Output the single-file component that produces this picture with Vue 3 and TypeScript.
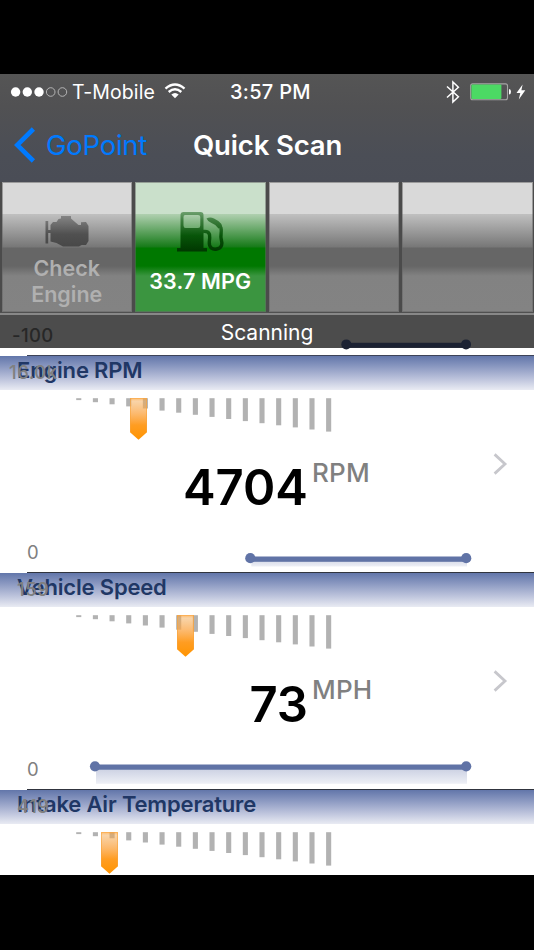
<script setup lang="ts">
interface Gauge {
  title: string
  max: string
  min: string
  value: string
  unit: string
  marker: number
  start: number
  fill: number
}

const gauges: Gauge[] = [
  { title: 'Engine RPM', max: '16.0k', min: '0', value: '4704', unit: 'RPM', marker: 130, start: 250.3, fill: 8 },
  { title: 'Vehicle Speed', max: '159', min: '0', value: '73', unit: 'MPH', marker: 177, start: 95, fill: 14 },
  { title: 'Intake Air Temperature', max: '419', min: '', value: '', unit: '', marker: 101, start: 0, fill: 0 },
]

const ticks = Array.from({ length: 16 }, (_, i) => ({ x: 76.2 + i * 16.66, h: 1.9 + i * 2.1 }))
</script>

<template>
  <main class="phone">
    <section class="screen">
      <header class="top">
        <div class="status">
          <svg class="signal" width="58" height="12" viewBox="0 0 58 12">
            <g fill="#fff">
              <circle cx="5.6" cy="6" r="4.7" />
              <circle cx="17.3" cy="6" r="4.7" />
              <circle cx="29" cy="6" r="4.7" />
            </g>
            <g fill="none" stroke="#bdbdbd" stroke-width="0.9">
              <circle cx="40.7" cy="6" r="4.3" />
              <circle cx="52.4" cy="6" r="4.3" />
            </g>
          </svg>
          <span class="carrier">T-Mobile</span>
          <svg class="wifi" width="22" height="16" viewBox="0 0 22 16">
            <g fill="none" stroke="#fff" stroke-width="2.4">
              <path d="M1.5 5.6 Q11 -2.6 20.5 5.6" />
              <path d="M4.7 9 Q11 3.6 17.3 9" />
            </g>
            <path d="M7.3 11.4 Q11 8.4 14.7 11.4 L11 15.2 Z" fill="#fff" />
          </svg>
          <span class="clock">3:57 PM</span>
          <svg class="bluetooth" width="14" height="24" viewBox="0 0 14 24">
            <path d="M1 6.5 L12.4 16.8 L6.9 22 V2 L12.4 7.2 L1 17.5" fill="none" stroke="#fff" stroke-width="1.5" />
          </svg>
          <svg class="battery" width="42" height="18" viewBox="0 0 42 18">
            <rect x="0.7" y="0.9" width="36.8" height="15.8" rx="2" fill="none" stroke="#a5a5a5" stroke-width="1.1" />
            <rect x="1.4" y="1.6" width="30" height="14.4" rx="1" fill="#4cd964" />
            <path d="M39 6 Q41 6.2 41 8.8 Q41 11.4 39 11.6 Z" fill="#fff" />
          </svg>
          <svg class="bolt" width="10" height="16" viewBox="0 0 10 16">
            <path d="M6.6 0.4 L0.5 9 H4.3 L2.8 15.5 L9.3 6.3 H5.4 Z" fill="#fff" />
          </svg>
        </div>
        <nav class="nav">
          <svg class="back" width="22" height="36" viewBox="0 0 22 36">
            <path d="M19.4 2 L3.2 18 L19.4 34" fill="none" stroke="#007aff" stroke-width="4.6" />
          </svg>
          <span class="back-label">GoPoint</span>
          <h1>Quick Scan</h1>
        </nav>
      </header>

      <div class="tiles">
        <div class="tile">
          <svg class="engine" width="46" height="34" viewBox="0 0 46 34">
            <defs>
              <linearGradient id="engineFill" x1="0" y1="0" x2="0" y2="1">
                <stop offset="0" stop-color="#858585" />
                <stop offset="0.6" stop-color="#505050" />
                <stop offset="1" stop-color="#484848" />
              </linearGradient>
            </defs>
            <path d="M1.5 7 H4.2 V16 H6.5 V11 L9 8 H12.5 L14.5 5 L17 4.5 V2 H27 V4.5 L31 8 L34.5 11 H37 V8.3 L42 8 L44.5 12 V27 L42 31 H37.5 L35 32.5 H19 L12.5 29 L6.5 27.5 V19 H4.2 V29.5 H1.5 Z" fill="url(#engineFill)" />
          </svg>
          <span class="check">Check<br>Engine</span>
        </div>
        <div class="tile green">
          <svg class="pump" width="50" height="42" viewBox="0 0 50 42">
            <defs>
              <linearGradient id="pumpFill" gradientUnits="userSpaceOnUse" x1="0" y1="0" x2="0" y2="41">
                <stop offset="0" stop-color="#73a474" />
                <stop offset="0.22" stop-color="#3f7f40" />
                <stop offset="0.6" stop-color="#075509" />
                <stop offset="1" stop-color="#003600" />
              </linearGradient>
            </defs>
            <path fill-rule="evenodd" d="M4.5 4 Q4.5 1 7.5 1 H24.5 Q27.5 1 27.5 4 V37 H31 V40.5 H1 V37 H4.5 Z M9 4 Q7.5 4 7.5 6 V14.5 Q7.5 17 9.5 17 H22 Q24.3 17 24.3 14.5 V6 Q24.3 4 22 4 Z" fill="url(#pumpFill)" />
            <path d="M27 20.5 Q32.5 19.8 33.5 23.5 Q34 26 33.3 31 C32.8 37 37 38.8 40.8 38 C46.5 36.8 46.4 32.5 45.2 28 C44.2 24.5 46 21 45 17 Q44 13.5 41 12" fill="none" stroke="url(#pumpFill)" stroke-width="3.4" />
            <path d="M30.5 7.5 Q34 5.5 38 7.5 L42.3 10 Q45.5 12 46 16 L42.5 17.5 Q40 13.5 35.5 12 Q32 11 30.5 7.5 Z" fill="url(#pumpFill)" />
          </svg>
          <span class="mpg">33.7 MPG</span>
        </div>
        <div class="tile"></div>
        <div class="tile"></div>
      </div>

      <div class="scan">
        <span class="floor">-100</span>
        <span class="scan-label">Scanning</span>
        <svg class="scan-line" width="132" height="12" viewBox="0 0 132 12">
          <rect x="6" y="4.8" width="120" height="5" fill="#1c2233" />
          <circle cx="6.3" cy="6.4" r="5" fill="#1c2233" />
          <circle cx="126" cy="6.4" r="5" fill="#1c2233" />
        </svg>
      </div>
      <div class="gap"></div>

      <article v-for="g in gauges" :key="g.title" class="gauge">
        <div class="heading">
          <h2>{{ g.title }}</h2>
          <span class="max" :class="{ wide: g.max.length > 3 }">{{ g.max }}</span>
        </div>
        <svg class="scale" width="534" height="50" viewBox="0 0 534 50">
          <defs>
            <linearGradient id="markerFill" x1="0" y1="0" x2="0" y2="1">
              <stop offset="0" stop-color="#ff9d2a" stop-opacity="0.65" />
              <stop offset="0.08" stop-color="#f3a850" stop-opacity="0.5" />
              <stop offset="0.35" stop-color="#fba544" stop-opacity="0.75" />
              <stop offset="0.65" stop-color="#ff9d22" />
              <stop offset="1" stop-color="#ff9400" />
            </linearGradient>
          </defs>
          <rect v-for="t in ticks" :key="t.x" :x="t.x" y="8.2" width="5.1" :height="t.h" fill="#b2b2b2" />
          <path :d="`M${g.marker} 8 h17 v34.2 l-8.5 7.6 l-8.5 -7.6 Z`" fill="url(#markerFill)" />
          <path :d="`M${g.marker + 0.5} 42 V8.6 h16 V42`" fill="none" stroke="#f9a33b" stroke-opacity="0.6" />
        </svg>
        <template v-if="g.value">
          <div class="reading">
            <strong>{{ g.value }}</strong>
            <span class="unit">{{ g.unit }}</span>
            <svg class="chevron" width="15" height="22" viewBox="0 0 15 22">
              <path d="M1.6 1.4 L12 11 L1.6 20.6" fill="none" stroke="#c7c7cc" stroke-width="2.8" />
            </svg>
          </div>
          <div class="history">
            <span class="min">{{ g.min }}</span>
            <svg class="trend" width="534" height="32" viewBox="0 0 534 32">
              <defs>
                <linearGradient id="areaFill" x1="0" y1="0" x2="0" y2="1">
                  <stop offset="0" stop-color="#ced3e4" />
                  <stop offset="1" stop-color="#eef0f6" />
                </linearGradient>
              </defs>
              <rect :x="g.start + 1" :y="g.fill > 10 ? 12.8 : 18.5" :width="466 - g.start" :height="g.fill" fill="url(#areaFill)" />
              <rect :x="g.start" :y="g.fill > 10 ? 7.5 : 16.5" :width="466 - g.start" height="5.3" fill="#6073a6" />
              <circle :cx="g.start" :cy="g.fill > 10 ? 9.3 : 18.2" r="5.1" fill="#6073a6" />
              <circle cx="466.2" :cy="g.fill > 10 ? 9.3 : 18.2" r="5.1" fill="#6073a6" />
            </svg>
          </div>
          <div class="rule"></div>
        </template>
      </article>
    </section>
  </main>
</template>

<style>
body { margin: 0; background: #000; }
</style>

<style scoped>
.phone {
  width: 534px;
  height: 950px;
  padding-top: 74px;
  box-sizing: border-box;
  background: #000;
  font-family: Inter, "Liberation Sans", sans-serif;
  overflow: hidden;
}
.screen { height: 801px; overflow: hidden; background: #fff; }
.top { height: 108px; background: linear-gradient(#555 0%, #515153 30%, #4b4e56 75%, #4a4d56 100%); color: #fff; }
.status { height: 36px; display: flex; align-items: center; box-sizing: border-box; padding: 0 8px 0 10px; white-space: nowrap; }
.carrier { font-size: 19.5px; margin-left: 4px; width: 83px; letter-spacing: 0.1px; }
.wifi { margin-left: 9px; margin-top: -2px; }
.clock { font-size: 20px; font-weight: 500; width: 82px; margin-left: 44px; letter-spacing: 0.3px; }
.bluetooth { margin-left: 134px; }
.battery { margin-left: 10px; }
.bolt { margin-left: 4px; }
.nav { height: 72px; display: flex; align-items: center; padding-left: 14px; }
.back { margin-top: -2px; }
.back-label { margin-left: 10px; width: 101px; color: #007aff; font-size: 27.5px; letter-spacing: -0.25px; margin-top: -2px; }
h1 { margin: -2px 0 0 46px; font-size: 27.5px; font-weight: 600; letter-spacing: -0.15px; white-space: nowrap; }
.tiles { height: 130px; display: grid; grid-template-columns: repeat(4, 130.5px); column-gap: 3px; padding: 0 1.5px; background: #4b4b4b; }
.tile {
  display: flex;
  flex-direction: column;
  align-items: center;
  box-sizing: border-box;
  border: 1px solid #66666688;
  background: linear-gradient(#d9d9d9 0 31.5px, #c0c0c0 32px, #777 65px, #666 66px 84px, #828282 94px, #838383 100%) border-box;
}
.tile.green {
  background: linear-gradient(#cae0cb 0 31.5px, #b0d0b0 32px, #167a18 65px, #007800 66px 84px, #3b9540 94px, #3b9540 100%) border-box;
}
.engine { margin-top: 31px; filter: blur(0.7px); }
.check { margin-top: 7px; color: #b0b0b0; font-size: 21.5px; line-height: 26px; font-weight: 600; text-align: center; }
.pump { margin: 28px 0 0 2px; filter: blur(0.5px); }
.mpg { margin-top: 15px; color: #fff; font-size: 21.5px; line-height: 26px; font-weight: 600; letter-spacing: 0.15px; white-space: nowrap; }
.scan { height: 36px; position: relative; box-sizing: border-box; background: linear-gradient(#505050 0 1px, #888 1px 3px, #4c4c4c 3px); text-align: center; }
.floor { position: absolute; left: 12px; top: 12px; font-size: 18.5px; line-height: 22px; font-weight: 500; letter-spacing: 0.4px; color: #272727; }
.scan-label { color: #fff; font-size: 21px; line-height: 41px; }
.scan-line { position: absolute; left: 340px; top: 26px; }
.gap { height: 8px; background: linear-gradient(90deg, transparent 27px, #3d4358 27px) 0 100% / 100% 1px no-repeat #fff; }
.gauge { height: 217px; display: flex; flex-direction: column; }
.heading { height: 34px; flex: none; position: relative; background: linear-gradient(#6276aa, #8997c0 30%, #b9c0da 65%, #e9ebf3); }
h2 { margin: 0; padding-left: 17px; color: #203765; font-size: 22px; line-height: 28px; font-weight: 600; letter-spacing: -0.17px; }
.max { position: absolute; left: 17px; top: 5px; color: #808080; font-size: 18.5px; line-height: 22px; font-weight: 500; letter-spacing: 0.5px; }
.max.wide { left: 9px; }
.scale, .trend { display: block; flex: none; }
.reading { height: 100px; display: flex; align-items: flex-start; flex: none; }
strong { width: 308px; text-align: right; font-size: 49px; line-height: 60px; font-weight: 600; margin-top: 18px; }
.unit { width: 180px; margin: 17px 0 0 4px; font-size: 26px; line-height: 32px; font-weight: 500; letter-spacing: 0.2px; color: #808080; }
.chevron { margin: 13px 0 0 1px; }
.history { height: 32px; position: relative; flex: none; }
.min { position: absolute; left: 27px; top: 1px; font-size: 18.5px; line-height: 22px; color: #808080; }
.rule { height: 1px; margin-left: 27px; background: #30343e; }
</style>
